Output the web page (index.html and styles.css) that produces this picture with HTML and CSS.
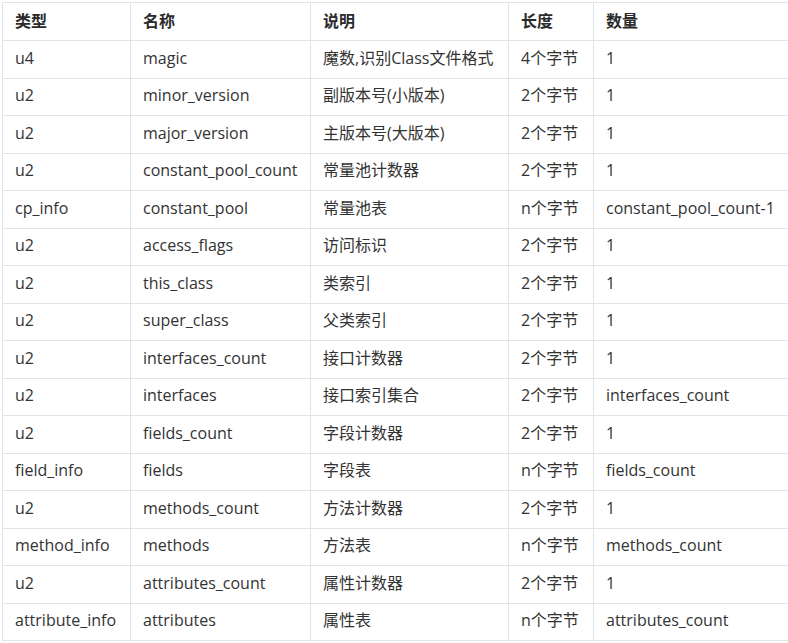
FILE: index.html
```html
<!DOCTYPE html>
<html lang="zh">
<head>
<meta charset="utf-8">
<title>Class 文件结构</title>
<link rel="stylesheet" href="styles.css">
</head>
<body>
<div class="wrap">
<table class="cf">
<colgroup>
<col class="c1"><col class="c2"><col class="c3"><col class="c4"><col class="c5">
</colgroup>
<thead>
<tr><th>类型</th><th>名称</th><th>说明</th><th>长度</th><th>数量</th></tr>
</thead>
<tbody>
<tr><td>u4</td><td>magic</td><td>魔数,识别Class文件格式</td><td>4个字节</td><td>1</td></tr>
<tr><td>u2</td><td>minor_version</td><td>副版本号(小版本)</td><td>2个字节</td><td>1</td></tr>
<tr><td>u2</td><td>major_version</td><td>主版本号(大版本)</td><td>2个字节</td><td>1</td></tr>
<tr><td>u2</td><td>constant_pool_count</td><td>常量池计数器</td><td>2个字节</td><td>1</td></tr>
<tr><td>cp_info</td><td>constant_pool</td><td>常量池表</td><td>n个字节</td><td>constant_pool_count-1</td></tr>
<tr><td>u2</td><td>access_flags</td><td>访问标识</td><td>2个字节</td><td>1</td></tr>
<tr><td>u2</td><td>this_class</td><td>类索引</td><td>2个字节</td><td>1</td></tr>
<tr><td>u2</td><td>super_class</td><td>父类索引</td><td>2个字节</td><td>1</td></tr>
<tr><td>u2</td><td>interfaces_count</td><td>接口计数器</td><td>2个字节</td><td>1</td></tr>
<tr><td>u2</td><td>interfaces</td><td>接口索引集合</td><td>2个字节</td><td>interfaces_count</td></tr>
<tr><td>u2</td><td>fields_count</td><td>字段计数器</td><td>2个字节</td><td>1</td></tr>
<tr><td>field_info</td><td>fields</td><td>字段表</td><td>n个字节</td><td>fields_count</td></tr>
<tr><td>u2</td><td>methods_count</td><td>方法计数器</td><td>2个字节</td><td>1</td></tr>
<tr><td>method_info</td><td>methods</td><td>方法表</td><td>n个字节</td><td>methods_count</td></tr>
<tr><td>u2</td><td>attributes_count</td><td>属性计数器</td><td>2个字节</td><td>1</td></tr>
<tr><td>attribute_info</td><td>attributes</td><td>属性表</td><td>n个字节</td><td>attributes_count</td></tr>
</tbody>
</table>
</div>
</body>
</html>
```
FILE: styles.css
```css
html, body {
  margin: 0;
  padding: 0;
  background: #ffffff;
}
.wrap {
  padding: 2px 0 0 2px;
  width: 786px;
  overflow: hidden;
}
.cf {
  border-collapse: collapse;
  table-layout: fixed;
  width: 820px;
  font-family: "Open Sans", "Noto Sans CJK SC", sans-serif;
  font-size: 16px;
  line-height: 20px;
  color: #333333;
}
.c1 { width: 128px; }
.c2 { width: 180px; }
.c3 { width: 198px; }
.c4 { width: 85px; }
.c5 { width: 229px; }
.cf th, .cf td {
  border: 1px solid #dfe6e9;
  padding: 0 0 3px 12px;
  text-align: left;
  white-space: nowrap;
  overflow: hidden;
}
.cf th {
  height: 34px;
  padding-top: 1px;
  padding-bottom: 2px;
  font-weight: bold;
  color: #2b2b2b;
}
.cf td {
  height: 33.5px;
}
```
